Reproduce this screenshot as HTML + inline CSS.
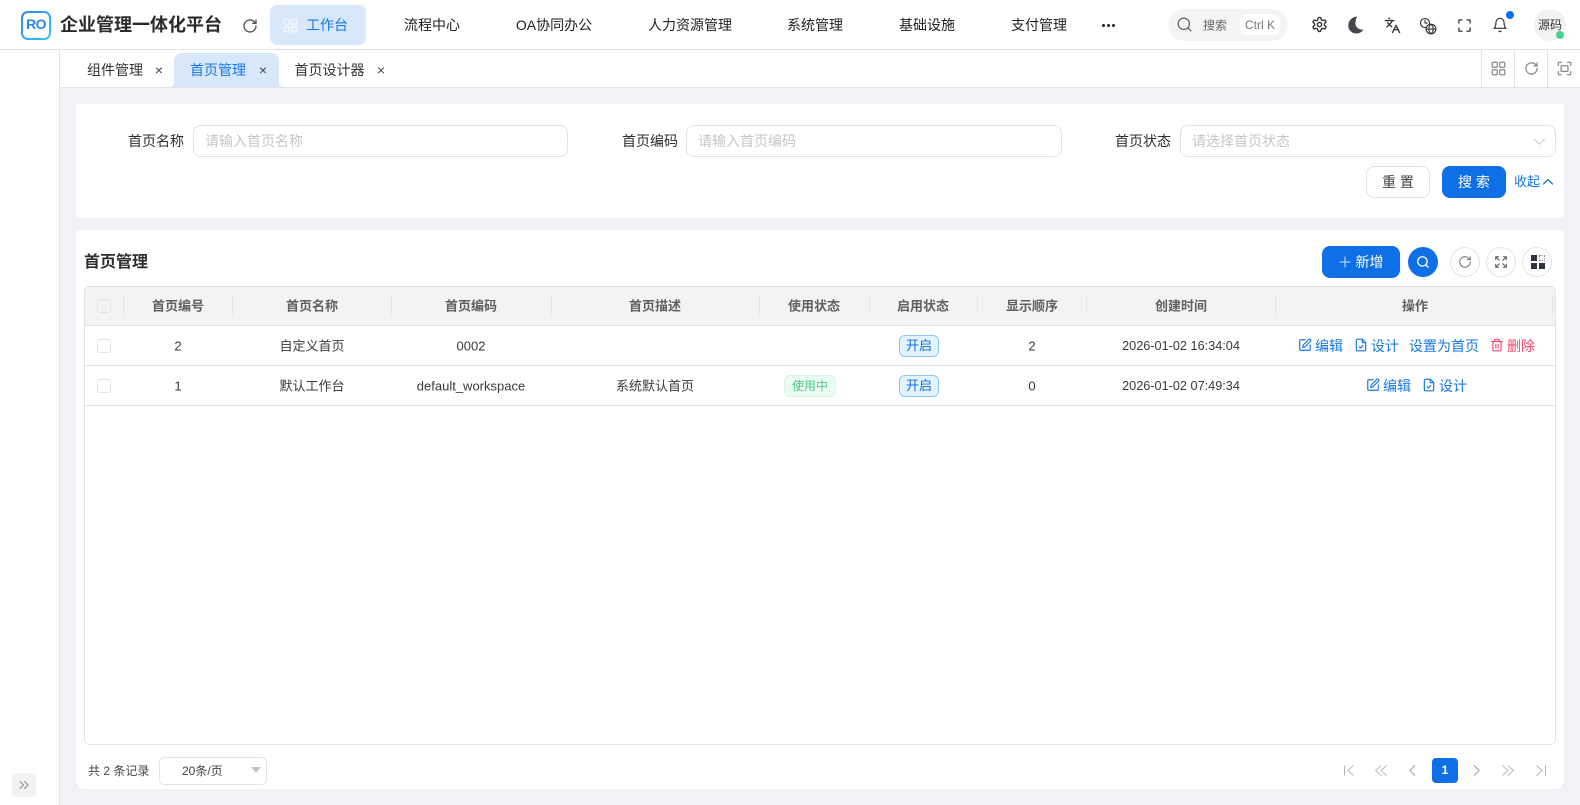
<!DOCTYPE html>
<html lang="zh-CN"><head><meta charset="utf-8"><title>首页管理</title>
<style>
*{box-sizing:border-box}
html,body{margin:0;padding:0}
body{width:1580px;height:805px;overflow:hidden;background:#f0f2f6;position:relative;font-family:"Liberation Sans","Noto Sans CJK SC",sans-serif;font-size:13px;color:#2e2e2e}
.a{position:absolute;white-space:nowrap}
.c{position:absolute;white-space:nowrap;transform:translate(-50%,-50%)}
svg{position:absolute;fill:none;stroke:currentColor;stroke-width:2;stroke-linecap:round;stroke-linejoin:round}
.m{font-size:14px;color:#222}
.t{font-size:14px;color:#333}
.x{font-size:14px;color:#444}
.th{font-weight:700;font-size:13px;color:#606060}
.td{font-size:13px;color:#3a3a3a}
.l{color:#1677e8;font-size:14px}
.lab{position:absolute;top:132px;font-size:14px;line-height:18px;color:#2e2e2e;white-space:nowrap}
.ln{position:absolute;background:#e2e3e6}
.dv{position:absolute;top:295px;width:1px;height:20px;background:#e6e6e6}
.inp{position:absolute;top:125px;height:32px;border:1px solid #e2e3e6;border-radius:8px;background:#fff;color:#c6c6c6;font-size:14px;line-height:31px;padding-left:11px}
.cb{position:absolute;left:97px;width:14px;height:14px;border:1px solid #e4e4e6;border-radius:3px;background:#fff}
.tag{position:absolute;height:22px;border-radius:6px;font-size:12px;line-height:20px;text-align:center}
.blue{left:899px;width:40px;background:#e4f4ff;border:1px solid #8cc8fa;color:#0f6fe6;font-size:13px}
.circ{position:absolute;top:247px;width:30px;height:30px;border-radius:50%;border:1px solid #e4e4e6;background:#fff;color:#555}
</style></head><body>
<!-- header -->
<div class="a" style="left:0;top:0;width:1580px;height:50px;background:#fff;border-bottom:1px solid #e2e3e6"></div>
<div class="a" style="left:21px;top:11px;width:30px;height:29px;border-radius:7px;background:linear-gradient(135deg,#2f86f0,#35c8fa)"></div>
<div class="a" style="left:23px;top:13px;width:26px;height:25px;border-radius:5px;background:#fff"></div>
<div class="c" style="left:36px;top:24px;font-size:14px;font-weight:700;color:#2288ee;letter-spacing:-.6px">RO</div>
<div class="a" style="left:60px;top:12px;font-size:18px;line-height:26px;font-weight:700;color:#2a2a2a">企业管理一体化平台</div>
<svg style="left:242px;top:18px;color:#555;stroke-width:2" width="16" height="16" viewBox="0 0 24 24"><path d="M21 12a9 9 0 1 1-2.600-6.400L21 8"/><path d="M21 3v5h-5"/></svg>
<div class="a" style="left:270px;top:5px;width:96px;height:40px;border-radius:7px;background:#d9e7fb"></div>
<svg style="left:283px;top:18px;color:#f2f6fd;stroke-width:2.400" width="15" height="15" viewBox="0 0 24 24"><rect x="2" y="2" width="8" height="8" rx="1.500"/><rect x="14" y="2" width="8" height="8" rx="1.500"/><rect x="2" y="14" width="8" height="8" rx="1.500"/><rect x="14" y="14" width="8" height="8" rx="1.500"/></svg>
<div class="c" style="left:327px;top:25px;font-size:14px;color:#1677e8">工作台</div>
<div class="c m" style="left:432px;top:25px">流程中心</div>
<div class="c m" style="left:554px;top:25px">OA协同办公</div>
<div class="c m" style="left:690px;top:25px">人力资源管理</div>
<div class="c m" style="left:815px;top:25px">系统管理</div>
<div class="c m" style="left:927px;top:25px">基础设施</div>
<div class="c m" style="left:1039px;top:25px">支付管理</div>
<div class="a" style="left:1102px;top:24px;width:3px;height:3px;border-radius:50%;background:#222;box-shadow:5px 0 #222,10px 0 #222"></div>
<div class="a" style="left:1168px;top:9px;width:120px;height:32px;border-radius:16px;background:#f4f4f5"></div>
<svg style="left:1176px;top:16px;color:#666;stroke-width:1.800" width="17" height="17" viewBox="0 0 24 24"><circle cx="11" cy="11" r="8"/><path d="m21 21-4.300-4.300"/></svg>
<div class="c" style="left:1215px;top:25px;font-size:12px;color:#666">搜索</div>
<div class="a" style="left:1240px;top:14px;width:40px;height:21px;border-radius:7px;background:#fff;text-align:center;font-size:12px;line-height:22px;color:#777">Ctrl K</div>
<svg style="left:1311px;top:16px;color:#333;stroke-width:2" width="17" height="17" viewBox="0 0 24 24"><path d="M12.200 2h-.4a2 2 0 0 0-2 2v.2a2 2 0 0 1-1 1.700l-.4.3a2 2 0 0 1-2 0l-.2-.1a2 2 0 0 0-2.700.7l-.2.4a2 2 0 0 0 .7 2.700l.2.1a2 2 0 0 1 1 1.700v.5a2 2 0 0 1-1 1.700l-.2.1a2 2 0 0 0-.7 2.700l.2.4a2 2 0 0 0 2.700.7l.2-.1a2 2 0 0 1 2 0l.4.3a2 2 0 0 1 1 1.700v.2a2 2 0 0 0 2 2h.4a2 2 0 0 0 2-2v-.2a2 2 0 0 1 1-1.700l.4-.3a2 2 0 0 1 2 0l.2.1a2 2 0 0 0 2.700-.7l.2-.4a2 2 0 0 0-.7-2.700l-.2-.1a2 2 0 0 1-1-1.700v-.5a2 2 0 0 1 1-1.700l.2-.1a2 2 0 0 0 .7-2.700l-.2-.4a2 2 0 0 0-2.700-.7l-.2.1a2 2 0 0 1-2 0l-.4-.3a2 2 0 0 1-1-1.700V4a2 2 0 0 0-2-2z"/><circle cx="12" cy="12" r="3"/></svg>
<svg style="left:1347px;top:16px;color:#44474c;fill:#44474c;stroke-width:.6" width="18" height="18" viewBox="0 0 24 24"><path d="M13 1C6.500 1.500 2 6.500 2 12.500A10 10 0 0 0 12.500 23c3.500 0 6.800-1.500 9-4.500-6 .5-10.500-3.500-10.500-9 0-3 .8-6 2-8.500z"/></svg>
<svg style="left:1384px;top:17px;color:#333;stroke-width:1.900" width="17" height="17" viewBox="0 0 24 24"><path d="m5 8 6 6"/><path d="m4 14 6-6 2-3"/><path d="M2 5h12"/><path d="M7 2h1"/><path d="m22 22-5-10-5 10"/><path d="M14 18h6"/></svg>
<svg style="left:1419px;top:17px;color:#333;stroke-width:1.500" width="18" height="18" viewBox="0 0 24 24"><circle cx="8" cy="8" r="6"/><path d="M8 4.500V8h3"/><circle cx="16" cy="16" r="6.500" fill="#fff"/><path d="M9.500 16h13M16 9.500c-4 4-4 9 0 13M16 9.500c4 4 4 9 0 13"/></svg>
<svg style="left:1457px;top:18px;color:#444;stroke-width:2.200" width="15" height="15" viewBox="0 0 24 24"><path d="M8 3H4a1 1 0 0 0-1 1v4"/><path d="M21 8V4a1 1 0 0 0-1-1h-4"/><path d="M3 16v4a1 1 0 0 0 1 1h4"/><path d="M16 21h4a1 1 0 0 0 1-1v-4"/></svg>
<svg style="left:1492px;top:17px;color:#333;stroke-width:1.800" width="16" height="16" viewBox="0 0 24 24"><path d="M6 8a6 6 0 0 1 12 0c0 7 3 9 3 9H3s3-2 3-9"/><path d="M10.300 21a1.900 1.900 0 0 0 3.400 0"/></svg>
<div class="a" style="left:1506px;top:11px;width:8px;height:8px;border-radius:50%;background:#0f6fe6"></div>
<div class="a" style="left:1534px;top:9px;width:32px;height:32px;border-radius:50%;background:#f2f2f3;text-align:center;font-size:12px;line-height:32px;color:#333">源码</div>
<div class="a" style="left:1556px;top:31px;width:8px;height:8px;border-radius:50%;background:#4fd08a"></div>
<!-- sidebar -->
<div class="a" style="left:0;top:50px;width:60px;height:755px;background:#fff;border-right:1px solid #e2e3e6"></div>
<div class="a" style="left:12px;top:773px;width:24px;height:24px;border-radius:4px;background:#f2f2f3"></div>
<svg style="left:18px;top:779px;color:#888;stroke-width:2" width="12" height="12" viewBox="0 0 24 24"><path d="m4 5 7 7-7 7"/><path d="m13 5 7 7-7 7"/></svg>
<!-- tabs -->
<div class="a" style="left:60px;top:50px;width:1520px;height:38px;background:#fff;border-bottom:1px solid #e2e3e6"></div>
<div class="a" style="left:174px;top:53px;width:105px;height:34px;background:#d9e7fb;border-radius:8px 8px 0 0"></div>
<div class="a" style="left:169px;top:82px;width:5px;height:5px;background:radial-gradient(circle at 0 0,#fff 4.800px,#d9e7fb 5.200px)"></div>
<div class="a" style="left:279px;top:82px;width:5px;height:5px;background:radial-gradient(circle at 100% 0,#fff 4.800px,#d9e7fb 5.200px)"></div>
<div class="c t" style="left:115px;top:69.500px">组件管理</div>
<div class="c x" style="left:159px;top:70px">×</div>
<div class="c t" style="left:218px;top:69.500px;color:#1677e8">首页管理</div>
<div class="c x" style="left:263px;top:70px">×</div>
<div class="c t" style="left:329.500px;top:69.500px">首页设计器</div>
<div class="c x" style="left:381px;top:70px">×</div>
<div class="ln" style="left:1481px;top:50px;width:1px;height:37px"></div>
<div class="ln" style="left:1514px;top:50px;width:1px;height:37px"></div>
<div class="ln" style="left:1547px;top:50px;width:1px;height:37px"></div>
<svg style="left:1491px;top:61px;color:#8a8a8e;stroke-width:2" width="15" height="15" viewBox="0 0 24 24"><rect x="2" y="2" width="8" height="8" rx="1.500"/><rect x="14" y="2" width="8" height="8" rx="1.500"/><rect x="2" y="14" width="8" height="8" rx="1.500"/><rect x="14" y="14" width="8" height="8" rx="1.500"/></svg>
<svg style="left:1524px;top:61px;color:#8a8a8e;stroke-width:2" width="15" height="15" viewBox="0 0 24 24"><path d="M21 12a9 9 0 1 1-2.600-6.400L21 8"/><path d="M21 3v5h-5"/></svg>
<svg style="left:1557px;top:61px;color:#8a8a8e;stroke-width:2" width="15" height="15" viewBox="0 0 24 24"><path d="M7 2H4a2 2 0 0 0-2 2v3M17 2h3a2 2 0 0 1 2 2v3M2 17v3a2 2 0 0 0 2 2h3M22 17v3a2 2 0 0 1-2 2h-3"/><rect x="6.500" y="7.500" width="11" height="9" rx="1"/></svg>
<!-- search card -->
<div class="a" style="left:76px;top:104px;width:1488px;height:114px;background:#fff;border-radius:3px"></div>
<div class="lab" style="left:128px">首页名称</div>
<div class="inp" style="left:193px;width:375px">请输入首页名称</div>
<div class="lab" style="left:622px">首页编码</div>
<div class="inp" style="left:686px;width:376px">请输入首页编码</div>
<div class="lab" style="left:1115px">首页状态</div>
<div class="inp" style="left:1180px;width:376px">请选择首页状态</div>
<svg style="left:1533px;top:135px;color:#c4c4c8;stroke-width:1.800" width="13" height="13" viewBox="0 0 24 24"><path d="m3 8 9 9 9-9"/></svg>
<div class="a" style="left:1366px;top:166px;width:64px;height:32px;border:1px solid #e2e3e6;border-radius:8px;background:#fff;text-align:center;font-size:14px;line-height:30px;color:#444">重 置</div>
<div class="a" style="left:1442px;top:166px;width:64px;height:32px;border-radius:8px;background:#0f6fe6;text-align:center;font-size:14px;line-height:32px;color:#fff">搜 索</div>
<div class="a" style="left:1514px;top:173px;line-height:18px;color:#1677e8;font-size:13px">收起</div>
<svg style="left:1542px;top:176px;color:#1677e8;stroke-width:2.600" width="12" height="12" viewBox="0 0 24 24"><path d="m3 16 9-9 9 9"/></svg>
<!-- table card -->
<div class="a" style="left:76px;top:230px;width:1488px;height:559px;background:#fff;border-radius:3px 3px 8px 8px"></div>
<div class="a" style="left:84px;top:252px;font-size:16px;line-height:22px;font-weight:700;color:#2e2e2e">首页管理</div>
<div class="a" style="left:1322px;top:246px;width:78px;height:32px;border-radius:8px;background:#0f6fe6;color:#fff;font-size:14px;line-height:32px;padding-left:33.500px">新增</div>
<svg style="left:1339px;top:256px;color:#d6e6fb;stroke-width:2" width="12" height="12" viewBox="0 0 24 24"><path d="M12 2v20M2 12h20"/></svg>
<div class="a" style="left:1408px;top:247px;width:30px;height:30px;border-radius:50%;background:#0f6fe6"></div>
<svg style="left:1416px;top:255px;color:#fff;stroke-width:2.200" width="14" height="14" viewBox="0 0 24 24"><circle cx="11" cy="11" r="8"/><path d="m21 21-4.300-4.300"/></svg>
<div class="circ" style="left:1450px"></div>
<svg style="left:1458px;top:255px;color:#666;stroke-width:1.600" width="14" height="14" viewBox="0 0 24 24"><path d="M21 12a9 9 0 1 1-2.600-6.400L21 8"/><path d="M21 3v5h-5"/></svg>
<div class="circ" style="left:1486px"></div>
<svg style="left:1494px;top:255px;color:#555;stroke-width:1.800" width="14" height="14" viewBox="0 0 24 24"><path d="M3 8V3h5M3 3l6 6M16 3h5v5M21 3l-6 6M3 16v5h5M3 21l6-6M21 16v5h-5M21 21l-6-6"/></svg>
<div class="circ" style="left:1522px"></div>
<div class="a" style="left:1531px;top:255px;width:6px;height:6px;background:#2e3440"></div>
<div class="a" style="left:1539px;top:255px;width:6px;height:6px;border:1px dotted #8a8f99"></div>
<div class="a" style="left:1531px;top:263px;width:6px;height:6px;background:#2e3440"></div>
<div class="a" style="left:1539px;top:263px;width:6px;height:6px;background:#2e3440"></div>
<!-- table -->
<div class="a" style="left:84px;top:286px;width:1472px;height:459px;border:1px solid #e2e3e6;border-radius:5px;background:#fff"></div>
<div class="a" style="left:85px;top:287px;width:1470px;height:38px;background:#f3f3f4;border-radius:4px 4px 0 0"></div>
<div class="ln" style="left:85px;top:325px;width:1470px;height:1px"></div>
<div class="ln" style="left:85px;top:365px;width:1470px;height:1px"></div>
<div class="ln" style="left:85px;top:405px;width:1470px;height:1px"></div>
<div class="dv" style="left:123px"></div><div class="dv" style="left:232px"></div><div class="dv" style="left:391px"></div><div class="dv" style="left:551px"></div><div class="dv" style="left:759px"></div><div class="dv" style="left:869px"></div><div class="dv" style="left:977px"></div><div class="dv" style="left:1086px"></div><div class="dv" style="left:1275px"></div><div class="dv" style="left:1552px"></div>
<div class="cb" style="top:299px;background:#f3f3f4"></div>
<div class="c th" style="left:178px;top:305px">首页编号</div>
<div class="c th" style="left:312px;top:305px">首页名称</div>
<div class="c th" style="left:471px;top:305px">首页编码</div>
<div class="c th" style="left:655px;top:305px">首页描述</div>
<div class="c th" style="left:814px;top:305px">使用状态</div>
<div class="c th" style="left:923px;top:305px">启用状态</div>
<div class="c th" style="left:1032px;top:305px">显示顺序</div>
<div class="c th" style="left:1181px;top:305px">创建时间</div>
<div class="c th" style="left:1415px;top:305px">操作</div>
<!-- row 1 -->
<div class="cb" style="top:339px"></div>
<div class="c td" style="left:178px;top:346px">2</div>
<div class="c td" style="left:312px;top:345px">自定义首页</div>
<div class="c td" style="left:471px;top:346px">0002</div>
<div class="tag blue" style="top:335px">开启</div>
<div class="c td" style="left:1032px;top:346px">2</div>
<div class="c td" style="left:1181px;top:346px;font-size:12.700px">2026-01-02 16:34:04</div>
<svg style="left:1298px;top:338px;color:#1677e8;stroke-width:2" width="14" height="14" viewBox="0 0 24 24"><path d="M12 3H5a2 2 0 0 0-2 2v14a2 2 0 0 0 2 2h14a2 2 0 0 0 2-2v-7"/><path d="M18.400 2.600a2.100 2.100 0 0 1 3 3L12 15l-4 1 1-4z"/></svg>
<div class="a l" style="left:1315px;top:337px;line-height:18px">编辑</div>
<svg style="left:1354px;top:338px;color:#1677e8;stroke-width:2" width="14" height="14" viewBox="0 0 24 24"><path d="M14 2H6a2 2 0 0 0-2 2v16a2 2 0 0 0 2 2h12a2 2 0 0 0 2-2V8z"/><path d="M14 2v6h6"/><path d="m9 15 2 2 4-4"/></svg>
<div class="a l" style="left:1371px;top:337px;line-height:18px">设计</div>
<div class="a l" style="left:1409px;top:337px;line-height:18px">设置为首页</div>
<svg style="left:1490px;top:338px;color:#f0476b;stroke-width:2" width="14" height="14" viewBox="0 0 24 24"><path d="M3 6h18"/><path d="M19 6v14a2 2 0 0 1-2 2H7a2 2 0 0 1-2-2V6"/><path d="M8 6V4a2 2 0 0 1 2-2h4a2 2 0 0 1 2 2v2"/><path d="M10 11v6M14 11v6"/></svg>
<div class="a" style="left:1507px;top:337px;line-height:18px;font-size:14px;color:#f0476b">删除</div>
<!-- row 2 -->
<div class="cb" style="top:379px"></div>
<div class="c td" style="left:178px;top:386px">1</div>
<div class="c td" style="left:312px;top:385px">默认工作台</div>
<div class="c td" style="left:471px;top:386px">default_workspace</div>
<div class="c td" style="left:655px;top:385px">系统默认首页</div>
<div class="tag" style="left:784px;top:375px;width:52px;background:#ecfbf2;border:1px solid #d8f5e4;color:#4fc987">使用中</div>
<div class="tag blue" style="top:375px">开启</div>
<div class="c td" style="left:1032px;top:386px">0</div>
<div class="c td" style="left:1181px;top:386px;font-size:12.700px">2026-01-02 07:49:34</div>
<svg style="left:1366px;top:378px;color:#1677e8;stroke-width:2" width="14" height="14" viewBox="0 0 24 24"><path d="M12 3H5a2 2 0 0 0-2 2v14a2 2 0 0 0 2 2h14a2 2 0 0 0 2-2v-7"/><path d="M18.400 2.600a2.100 2.100 0 0 1 3 3L12 15l-4 1 1-4z"/></svg>
<div class="a l" style="left:1383px;top:377px;line-height:18px">编辑</div>
<svg style="left:1422px;top:378px;color:#1677e8;stroke-width:2" width="14" height="14" viewBox="0 0 24 24"><path d="M14 2H6a2 2 0 0 0-2 2v16a2 2 0 0 0 2 2h12a2 2 0 0 0 2-2V8z"/><path d="M14 2v6h6"/><path d="m9 15 2 2 4-4"/></svg>
<div class="a l" style="left:1439px;top:377px;line-height:18px">设计</div>
<!-- pagination -->
<div class="a" style="left:88px;top:762px;font-size:12px;line-height:18px;color:#444">共 2 条记录</div>
<div class="a" style="left:159px;top:757px;width:108px;height:28px;border:1px solid #e2e3e6;border-radius:5px;background:#fff;font-size:12px;line-height:27px;color:#444;padding-left:22px">20条/页</div>
<div class="a" style="left:251px;top:767px;width:0;height:0;border-left:5px solid transparent;border-right:5px solid transparent;border-top:6px solid #c0c4cc"></div>
<svg style="left:1343px;top:764px;color:#9aa3ad;stroke-width:1.500" width="13" height="13" viewBox="0 0 24 24"><path d="M3 3v18M19 3l-10 9 10 9"/></svg>
<svg style="left:1374px;top:764px;color:#9aa3ad;stroke-width:1.500" width="14" height="13" viewBox="0 0 24 24"><path d="M12 3 2 12l10 9M22 3l-10 9 10 9"/></svg>
<svg style="left:1406px;top:764px;color:#9aa3ad;stroke-width:1.800" width="13" height="13" viewBox="0 0 24 24"><path d="M16 3 7 12l9 9"/></svg>
<div class="a" style="left:1432px;top:758px;width:26px;height:25px;border-radius:4px;background:#0f6fe6;color:#fff;font-size:12px;font-weight:700;line-height:25px;text-align:center">1</div>
<svg style="left:1470px;top:764px;color:#9aa3ad;stroke-width:1.800" width="13" height="13" viewBox="0 0 24 24"><path d="m8 3 9 9-9 9"/></svg>
<svg style="left:1501px;top:764px;color:#9aa3ad;stroke-width:1.500" width="14" height="13" viewBox="0 0 24 24"><path d="m2 3 10 9-10 9M12 3l10 9-10 9"/></svg>
<svg style="left:1534px;top:764px;color:#9aa3ad;stroke-width:1.500" width="13" height="13" viewBox="0 0 24 24"><path d="m5 3 10 9-10 9M21 3v18"/></svg>
</body></html>
